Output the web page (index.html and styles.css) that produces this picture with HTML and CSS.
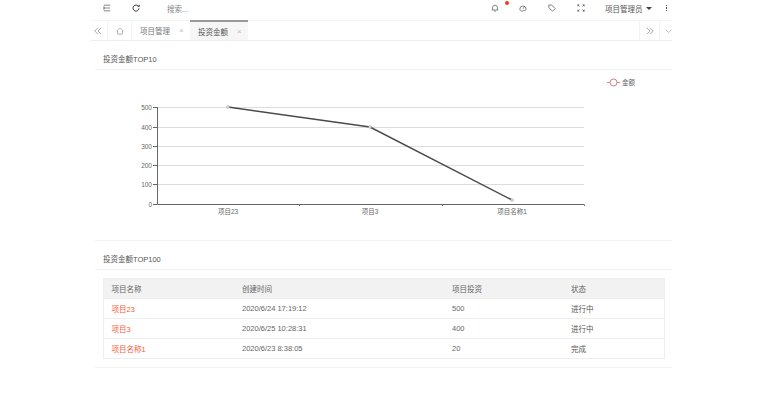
FILE: index.html
```html
<!DOCTYPE html>
<html lang="en">
<head>
  <meta charset="utf-8">
  <title>投资金额</title>
  <link rel="stylesheet" href="styles.css">
</head>
<body>
  <div class="page">
    <header class="topbar">
      <div class="topbar-left">
        <svg class="icon icon-menu" viewBox="0 0 10 10"><path d="M1 1.500h8M4 5h5M1 8.500h8M1 3.500l2 1.500-2 1.500z"/></svg>
        <svg class="icon icon-refresh" viewBox="0 0 10 10"><path d="M8.300 3.200A3.800 3.800 0 1 0 8.800 5.500"/><path class="solid" d="M6.500 3.500h3v-3z"/></svg>
        <span class="search">搜索...</span>
      </div>
      <div class="topbar-right">
        <div class="bell-wrap">
          <svg class="icon" viewBox="0 0 10 10"><path d="M2 7.500V4.500a3 3 0 0 1 6 0v3M1 7.500h8M4 9h2"/></svg>
          <span class="dot"></span>
        </div>
        <svg class="icon icon-palette" viewBox="0 0 10 10"><path d="M1 6.500a4 4 0 0 1 8 0c0 1.500-2 1.500-3 1.500-.8 0-1 1-2 1-1.500 0-3-1-3-2.500zM5 6l2-3M2.500 6h.1M3.500 4h.1"/></svg>
        <svg class="icon icon-tag" viewBox="0 0 10 10"><path d="M1 2v-.8h3.500l4.500 4.500-3.300 3.300L1 4.500zM3 3.200h.1"/></svg>
        <svg class="icon icon-full" viewBox="0 0 10 10"><path d="M1 3V1h2M9 3V1H7M1 7v2h2M9 7v2H7M1 1l2 2M9 1L7 3M1 9l2-2M9 9L7 7"/></svg>
        <span class="user">项目管理员<i class="caret"></i></span>
        <span class="more"><i></i><i></i><i></i></span>
      </div>
    </header>

    <nav class="tabbar">
      <button class="tab-btn tab-prev">
        <svg class="icon" viewBox="0 0 10 10"><path d="M5 1L1 5l4 4M9 1L5 5l4 4"/></svg>
      </button>
      <button class="tab-btn tab-home">
        <svg class="icon" viewBox="0 0 10 10"><path d="M5 1L1 5h1.200v4h5.600V5H9z"/></svg>
      </button>
      <div class="tab">项目管理<span class="close">×</span></div>
      <div class="tab active">投资金额<span class="close">×</span></div>
      <div class="tab-space"></div>
      <button class="tab-btn tab-next">
        <svg class="icon" viewBox="0 0 10 10"><path d="M1 1l4 4-4 4M5 1l4 4-4 4"/></svg>
      </button>
      <button class="tab-btn tab-down">
        <svg class="icon" viewBox="0 0 10 10"><path d="M1 3l4 4 4-4"/></svg>
      </button>
    </nav>

    <section class="panel panel-chart">
      <h3 class="panel-title">投资金额TOP10</h3>
      <div class="chart">
        <svg class="chart-svg" viewBox="0 0 577 170">
          <g class="grid">
            <line x1="62" y1="37.500" x2="489" y2="37.500"/>
            <line x1="62" y1="57.500" x2="489" y2="57.500"/>
            <line x1="62" y1="76.500" x2="489" y2="76.500"/>
            <line x1="62" y1="95.500" x2="489" y2="95.500"/>
            <line x1="62" y1="114.500" x2="489" y2="114.500"/>
          </g>
          <path class="axis" d="M62.500 37v97.500H489M58 37.500h4M58 57.500h4M58 76.500h4M58 95.500h4M58 114.500h4M58 134.500h4M204.500 134.500v1.500M347.500 134.500v1.500M489.500 134.500v1.500"/>
          <g class="y-labels">
            <text x="57" y="40">500</text>
            <text x="57" y="60">400</text>
            <text x="57" y="79">300</text>
            <text x="57" y="98">200</text>
            <text x="57" y="117">100</text>
            <text x="57" y="137">0</text>
          </g>
          <g class="x-labels">
            <text x="133" y="144">项目23</text>
            <text x="275" y="144">项目3</text>
            <text x="417" y="144">项目名称1</text>
          </g>
          <polyline class="series" points="133,37 275,57 417,130"/>
          <circle class="point" cx="133" cy="37" r="1.300"/>
          <circle class="point" cx="275" cy="57" r="1.300"/>
          <circle class="point" cx="417" cy="130" r="1.300"/>
          <path class="legend-line" d="M512 12.500h13"/>
          <circle class="legend-dot" cx="518.500" cy="12.500" r="3.500"/>
          <text class="legend-text" x="527" y="15">金额</text>
        </svg>
      </div>
    </section>

    <section class="panel panel-table">
      <h3 class="panel-title">投资金额TOP100</h3>
      <div class="table-wrap">
        <table class="data-table">
          <thead>
            <tr><th class="col-name">项目名称</th><th class="col-time">创建时间</th><th class="col-money">项目投资</th><th>状态</th></tr>
          </thead>
          <tbody>
            <tr><td><a>项目23</a></td><td>2020/6/24 17:19:12</td><td>500</td><td class="status">进行中</td></tr>
            <tr><td><a>项目3</a></td><td>2020/6/25 10:28:31</td><td>400</td><td class="status">进行中</td></tr>
            <tr><td><a>项目名称1</a></td><td>2020/6/23 8:38:05</td><td>20</td><td class="status">完成</td></tr>
          </tbody>
        </table>
      </div>
    </section>
  </div>
</body>
</html>
```

FILE: styles.css
```css
* {
  margin: 0;
  padding: 0;
  box-sizing: border-box;
}

body {
  font-family: "Liberation Sans", "Noto Sans CJK SC", sans-serif;
  font-size: 7.5px;
  color: #666;
  background: #fff;
}

.page {
  width: 581px;
  margin-left: 91px;
}

.icon {
  display: block;
  width: 8px;
  height: 8px;
  fill: none;
  stroke: #555;
  stroke-width: 0.9;
}

.solid {
  fill: #333;
  stroke: none;
}

/* top bar */
.topbar {
  height: 20px;
  padding-bottom: 4px;
  display: flex;
  align-items: center;
  justify-content: space-between;
}

.topbar-left {
  display: flex;
  align-items: center;
  padding-left: 12px;
}

.icon-refresh {
  margin-left: 21px;
  stroke-width: 1.200;
  stroke: #333;
}

.search {
  margin-left: 27px;
  color: #888;
}

.topbar-right {
  display: flex;
  align-items: center;
  padding-right: 5px;
}

.bell-wrap {
  position: relative;
}

.dot {
  position: absolute;
  top: -3px;
  left: 14px;
  width: 4px;
  height: 4px;
  border-radius: 50%;
  background: #f5391c;
}

.icon-palette {
  margin-left: 20px;
}

.icon-tag {
  margin-left: 21px;
}

.icon-full {
  margin-left: 21px;
}

.user {
  margin-left: 20px;
  color: #555;
  display: flex;
  align-items: center;
}

.caret {
  margin-left: 3px;
  border: 3px solid transparent;
  border-top: 3px solid #444;
  border-bottom: 0;
}

.more {
  margin-left: 14px;
  display: flex;
  flex-direction: column;
  gap: 1px;
}

.more i {
  display: block;
  width: 1.500px;
  height: 1.500px;
  background: #555;
}

/* tabs */
.tabbar {
  height: 21px;
  display: flex;
  align-items: stretch;
  border-top: 1px solid #f4f4f4;
  border-bottom: 1px solid #eee;
}

.tab-btn {
  display: flex;
  align-items: center;
  justify-content: center;
  background: none;
  border: 0;
}

.tab-prev {
  width: 17px;
  justify-content: flex-start;
  padding-left: 3px;
  border-right: 1px solid #f4f4f4;
}

.tab-home {
  width: 24px;
  border-right: 1px solid #f4f4f4;
}

.tab-prev .icon, .tab-next .icon {
  stroke: #888;
}

.tab-home .icon, .tab-down .icon {
  stroke: #999;
}

.tab {
  width: 58px;
  display: flex;
  align-items: center;
  padding-left: 8px;
  color: #777;
}

.tab.active {
  width: 58px;
  margin-top: -1px;
  color: #555;
  background: #f6f6f6;
  border-top: 2px solid #999;
}

.close {
  margin-left: 9px;
  color: #bbb;
  font-size: 8px;
}

.tab-space {
  flex: 1;
}

.tab-next {
  width: 21px;
  border-left: 1px solid #f4f4f4;
  border-right: 1px solid #f4f4f4;
}

.tab-down {
  width: 12px;
  justify-content: flex-start;
  padding-left: 5px;
}

/* panels */
.panel {
  margin-left: 4px;
  border-bottom: 1px solid #f2f2f2;
}

.panel-title {
  height: 29px;
  padding: 14px 0 0 8px;
  font-size: 7.5px;
  font-weight: normal;
  line-height: 10px;
  color: #555;
  border-bottom: 1px solid #f2f2f2;
}

.chart {
  height: 170px;
}

.chart-svg {
  display: block;
  width: 577px;
  height: 170px;
}

.grid line {
  stroke: #ddd;
  stroke-width: 1;
}

.axis {
  fill: none;
  stroke: #666;
  stroke-width: 1;
}

.chart-svg text {
  font-size: 6.500px;
  fill: #666;
}

.y-labels text {
  text-anchor: end;
}

.x-labels text {
  text-anchor: middle;
}

.series {
  fill: none;
  stroke: #4a4a4f;
  stroke-width: 1.500;
}

.point {
  fill: #fff;
  stroke: #888;
  stroke-width: 0.600;
}

.legend-line {
  stroke: #c98a8a;
  stroke-width: 1;
}

.legend-dot {
  fill: #fff;
  stroke: #cf7f85;
  stroke-width: 1;
}

.panel-table {
  height: 127px;
}

.table-wrap {
  padding: 8px 8px 0;
}

.data-table {
  width: 562px;
  border-collapse: collapse;
  table-layout: fixed;
  border: 1px solid #eee;
}

.data-table th,
.data-table td {
  height: 20px;
  padding: 0 0 0 7.5px;
  text-align: left;
  font-weight: normal;
  border-bottom: 1px solid #eee;
}

.data-table th {
  background: #f2f2f2;
}

.col-name {
  width: 131px;
}

.col-time {
  width: 210px;
}

.col-money {
  width: 119px;
}

.data-table a {
  color: #f2603c;
}

.status {
  color: #555;
}
```
